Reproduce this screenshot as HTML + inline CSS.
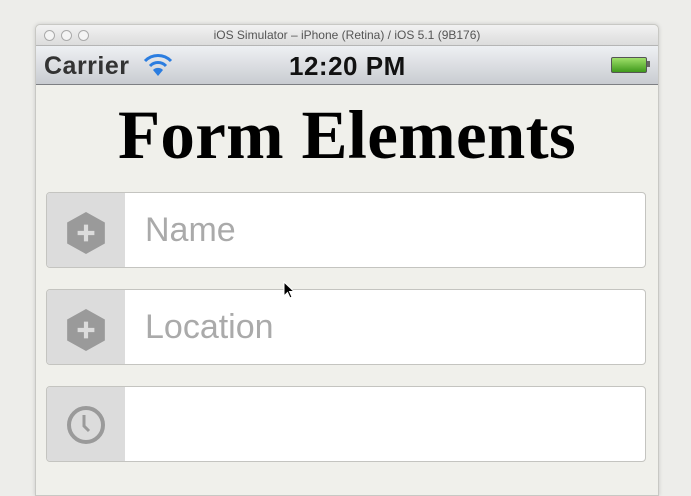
<!DOCTYPE html>
<html><head><style>
body{margin:0;width:691px;height:480px;background:#ededea;position:relative;overflow:hidden;font-family:"Liberation Sans",sans-serif}
.win{position:absolute;left:35px;top:24px;width:622px;height:470px;background:#f0f0eb;border:1px solid #c8c8c4;border-radius:5px 5px 0 0;box-shadow:0 0 4px rgba(0,0,0,.15)}
.title{height:20px;background:linear-gradient(#f2f2f2,#dcdcdc);border-bottom:1px solid #b5b5b5;text-align:center;font-size:12px;line-height:20px;color:#555;position:relative;border-radius:5px 5px 0 0}
.dot{position:absolute;top:5px;width:9px;height:9px;border:1px solid #aaa;border-radius:50%;background:#f4f4f4}
.status{height:38px;background:linear-gradient(#eef0f3,#c9ccd1);border-bottom:1px solid #7d7f83;position:relative}
.field{position:absolute;left:10px;width:598px;height:74px;border:1px solid #c4c4c0;border-radius:4px;background:#fff;overflow:hidden}
.ic{position:absolute;left:0;top:0;width:78px;height:74px;background:#dcdcdc}
.ph{position:absolute;left:98px;top:18px;font-size:34px;color:#aaa}
</style></head><body>
<div class="win">
<div class="title"><span class="dot" style="left:8px"></span><span class="dot" style="left:25px"></span><span class="dot" style="left:42px"></span>iOS Simulator – iPhone (Retina) / iOS 5.1 (9B176)</div>
<div class="status">
<span style="position:absolute;left:8px;top:6px;font-size:25px;font-weight:bold;color:#333;letter-spacing:0.5px">Carrier</span>
<svg style="position:absolute;left:106px;top:7px" width="32" height="24" viewBox="0 0 32 24"><g fill="none" stroke="#2b7de0" stroke-width="3"><path d="M3 8 A18 18 0 0 1 29 8"/><path d="M8 13 A11 11 0 0 1 24 13"/></g><path d="M11 17 A7 7 0 0 1 21 17 L16 23Z" fill="#2b7de0"/></svg>
<span style="position:absolute;left:253px;top:5px;font-size:26px;font-weight:bold;color:#111;letter-spacing:0.5px">12:20 PM</span>
<div style="position:absolute;left:575px;top:11px;width:34px;height:14px;border:1px solid #555;border-radius:2px;background:linear-gradient(#9fe06a,#3f9a1c)"></div>
<div style="position:absolute;left:611px;top:15px;width:3px;height:6px;background:#666"></div>
</div>
<div style="position:absolute;left:0;width:622px;top:71px;text-align:center;font-family:'Liberation Serif',serif;font-weight:bold;font-size:69px;letter-spacing:0.3px;color:#000">Form Elements</div>
<div class="field" style="top:167px"><div class="ic"><svg style="position:absolute;left:19px;top:18px" width="40" height="44" viewBox="0 0 38 42"><path d="M19 1 L37 11 V31 L19 41 L1 31 V11Z" fill="#9a9a9a"/><path d="M19 13V29M11 21H27" stroke="#dcdcdc" stroke-width="4"/></svg></div><span class="ph">Name</span></div>
<div class="field" style="top:264px"><div class="ic"><svg style="position:absolute;left:19px;top:18px" width="40" height="44" viewBox="0 0 38 42"><path d="M19 1 L37 11 V31 L19 41 L1 31 V11Z" fill="#9a9a9a"/><path d="M19 13V29M11 21H27" stroke="#dcdcdc" stroke-width="4"/></svg></div><span class="ph">Location</span></div>
<div class="field" style="top:361px"><div class="ic"><svg style="position:absolute;left:19px;top:18px" width="40" height="40" viewBox="0 0 40 40"><circle cx="20" cy="20" r="17" fill="none" stroke="#9a9a9a" stroke-width="4"/><path d="M18 10V21L23 26" fill="none" stroke="#9a9a9a" stroke-width="3"/></svg></div></div>
</div>
<svg style="position:absolute;left:283px;top:281px" width="12" height="18" viewBox="0 0 12 18"><path d="M1 1V15L4.5 11.5L7 17L9 16L6.5 10.5H11Z" fill="#000" stroke="#fff" stroke-width="1"/></svg>
</body></html>
